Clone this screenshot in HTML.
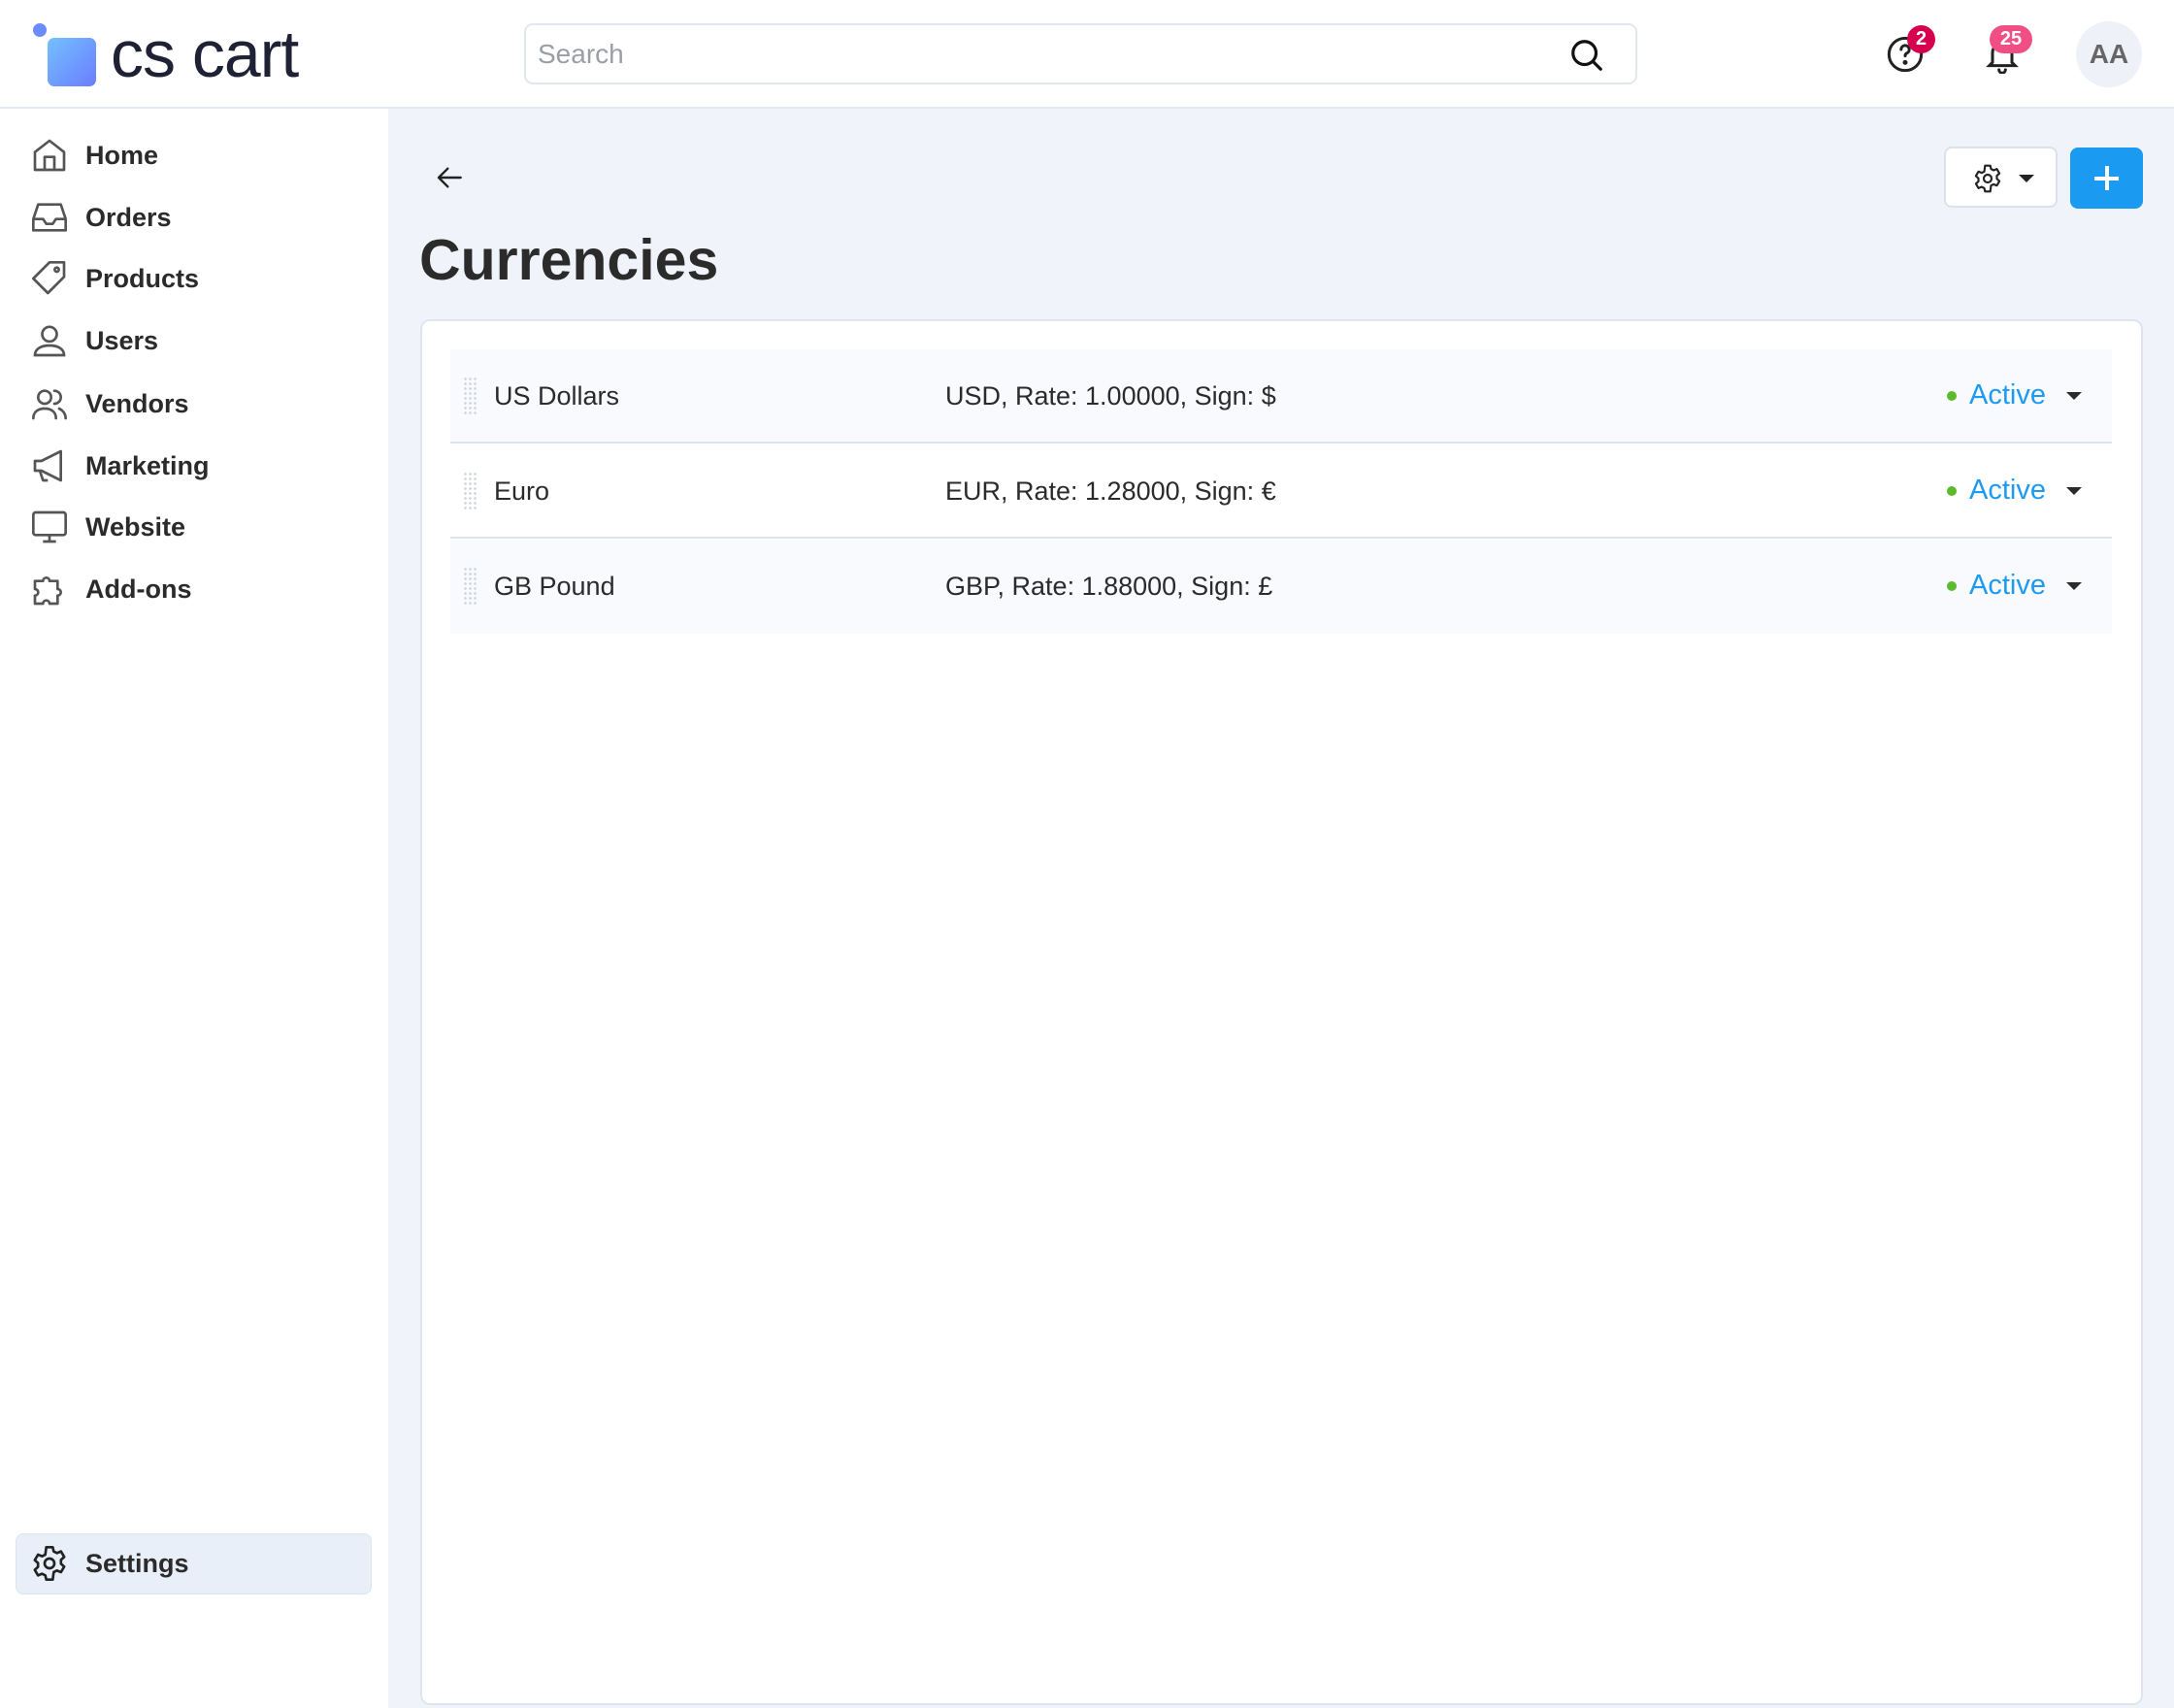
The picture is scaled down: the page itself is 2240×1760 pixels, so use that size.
<!DOCTYPE html>
<html><head><meta charset="utf-8"><style>
*{box-sizing:border-box;margin:0;padding:0}
body{width:2240px;height:1760px;overflow:hidden;background:#f0f4fa;font-family:"Liberation Sans",sans-serif;color:#2b2b2b;position:relative}
.hdr{position:absolute;left:0;top:0;width:2240px;height:112px;background:#fff;border-bottom:2px solid #e4e9f0}
.side{position:absolute;left:0;top:112px;width:400px;height:1648px;background:#fff}
.nav{position:absolute;left:88px;font-weight:bold;font-size:27px;color:#2b2b2b;line-height:40px}
.ic{position:absolute;left:31px;width:40px;height:40px}
.abs{position:absolute}
.row{position:absolute;left:464px;width:1712px;height:97px}
.row .nm{position:absolute;left:45px;top:30px;font-size:27px;line-height:36px}
.row .inf{position:absolute;left:510px;top:30px;font-size:27px;line-height:36px}
.row .dot{position:absolute;left:1542px;top:43px;width:10px;height:10px;border-radius:50%;background:#5bba2d}
.row .act{position:absolute;left:1565px;top:29px;font-size:29px;color:#1d9bf0;line-height:36px}
.row .car{position:absolute;left:1665px;top:44px;width:0;height:0;border-left:8px solid transparent;border-right:8px solid transparent;border-top:8px solid #2b2b2b}
.row .hd{position:absolute;left:13px;top:28px;width:16px;height:40px;background-image:radial-gradient(circle,#d4d9e0 1.3px,transparent 1.5px);background-size:5px 5px}
</style></head><body>
<div class="hdr">
  <div class="abs" style="left:34px;top:24px;width:14px;height:14px;border-radius:50%;background:#6b8cff"></div>
  <div class="abs" style="left:49px;top:39px;width:50px;height:50px;border-radius:7px;background:linear-gradient(135deg,#74c0ff,#6a7dff)"></div>
  <div class="abs" style="left:114px;top:16px;font-size:68px;letter-spacing:-1px;color:#1f2235;line-height:80px">cs cart</div>
  <div class="abs" style="left:540px;top:24px;width:1147px;height:63px;border:2px solid #e1e7ef;border-radius:9px;background:#fff">
    <div class="abs" style="left:12px;top:14px;font-size:28px;color:#9a9ea6;line-height:32px">Search</div>
    <svg class="abs" style="left:1074px;top:12px" width="38" height="38" viewBox="0 0 24 24" fill="none" stroke="#111" stroke-width="2" stroke-linecap="round"><circle cx="10.5" cy="10.5" r="7.5"/><path d="M16 16l5 5"/></svg>
  </div>
  <svg class="abs" style="left:1943px;top:36px" width="40" height="40" viewBox="0 0 24 24" fill="none" stroke="#222" stroke-width="1.8" stroke-linecap="round"><circle cx="12" cy="12" r="10"/><path d="M9.5 9a2.5 2.5 0 1 1 3.5 2.3c-.7.3-1 .9-1 1.7"/><circle cx="12" cy="17" r=".6" fill="#222"/></svg>
  <div class="abs" style="left:1965px;top:26px;width:29px;height:29px;border-radius:50%;background:#d6004f;color:#fff;font-weight:bold;font-size:20px;text-align:center;line-height:29px">2</div>
  <svg class="abs" style="left:2043px;top:36px" width="40" height="40" viewBox="0 0 24 24" fill="none" stroke="#222" stroke-width="1.8" stroke-linecap="round"><path d="M6 17V11a6 6 0 0 1 12 0v6l2 2H4z"/><path d="M10 21.5a2 2 0 0 0 4 0"/></svg>
  <div class="abs" style="left:2050px;top:26px;width:44px;height:29px;border-radius:15px;background:#f04f86;color:#fff;font-weight:bold;font-size:20px;text-align:center;line-height:29px">25</div>
  <div class="abs" style="left:2139px;top:22px;width:68px;height:68px;border-radius:50%;background:#eef2f8;color:#666;font-weight:bold;font-size:28px;text-align:center;line-height:68px">AA</div>
</div>
<div class="side">
  <svg class="ic" style="top:28px" viewBox="0 0 24 24" fill="none" stroke="#555" stroke-width="1.6" stroke-linejoin="round"><path d="M3 21V10l9-7 9 7v11z"/><path d="M9 21v-8h6v8"/></svg>
  <div class="nav" style="top:28px">Home</div>
  <svg class="ic" style="top:92px" viewBox="0 0 24 24" fill="none" stroke="#555" stroke-width="1.6" stroke-linejoin="round"><path d="M2 13l3-9h14l3 9v7H2z"/><path d="M2 13h6l2 3h4l2-3h6"/></svg>
  <div class="nav" style="top:92px">Orders</div>
  <svg class="ic" style="top:155px" viewBox="0 0 24 24" fill="none" stroke="#555" stroke-width="1.6" stroke-linejoin="round"><path d="M12 2h9v9L11 21l-9-9z"/><circle cx="16.5" cy="6.5" r="1.3"/></svg>
  <div class="nav" style="top:155px">Products</div>
  <svg class="ic" style="top:219px" viewBox="0 0 24 24" fill="none" stroke="#555" stroke-width="1.6"><circle cx="12" cy="8" r="4.5"/><path d="M3 21c0-4 4-6 9-6s9 2 9 6z"/></svg>
  <div class="nav" style="top:219px">Users</div>
  <svg class="ic" style="top:284px" viewBox="0 0 24 24" fill="none" stroke="#555" stroke-width="1.6" stroke-linecap="round"><circle cx="9" cy="8" r="4"/><path d="M2 21c0-4 3-6 7-6s7 2 7 6"/><path d="M15 4a4 4 0 0 1 0 8M18 15c2 1 4 3 4 6"/></svg>
  <div class="nav" style="top:284px">Vendors</div>
  <svg class="ic" style="top:348px" viewBox="0 0 24 24" fill="none" stroke="#555" stroke-width="1.6" stroke-linejoin="round"><path d="M3 9h4l12-6v18L7 15H3z"/><path d="M6 15l2 6h3"/></svg>
  <div class="nav" style="top:348px">Marketing</div>
  <svg class="ic" style="top:411px" viewBox="0 0 24 24" fill="none" stroke="#555" stroke-width="1.6"><rect x="2" y="3" width="20" height="14" rx="1.5"/><path d="M12 17v4M8 21h8"/></svg>
  <div class="nav" style="top:411px">Website</div>
  <svg class="ic" style="top:475px" viewBox="0 0 24 24" fill="none" stroke="#555" stroke-width="1.6" stroke-linejoin="round"><path d="M3 7h5a2 2 0 1 1 4 0h5v5a2 2 0 1 1 0 4v5h-5a2 2 0 1 0-4 0H3v-5a2 2 0 1 0 0-4z"/></svg>
  <div class="nav" style="top:475px">Add-ons</div>
  <div class="abs" style="left:16px;top:1468px;width:367px;height:63px;border-radius:8px;background:#e9eff8;border:1px solid #dde4ee"></div>
  <svg class="ic" style="top:1479px" viewBox="0 0 24 24" fill="none" stroke="#222" stroke-width="1.6" stroke-linejoin="round"><path d="M10 2h4l.6 2.6 2 1 2.5-1 2 3.4-2 1.8v2.4l2 1.8-2 3.4-2.5-1-2 1L14 22h-4l-.6-2.6-2-1-2.5 1-2-3.4 2-1.8v-2.4l-2-1.8 2-3.4 2.5 1 2-1z"/><circle cx="12" cy="12" r="3"/></svg>
  <div class="nav" style="top:1479px">Settings</div>
</div>
<svg class="abs" style="left:448px;top:167px" width="32" height="32" viewBox="0 0 24 24" fill="none" stroke="#222" stroke-width="1.8" stroke-linecap="round" stroke-linejoin="round"><path d="M20 12H4M10 5l-7 7 7 7"/></svg>
<div class="abs" style="left:432px;top:230px;font-size:59px;font-weight:bold;color:#2b2b2b;line-height:76px">Currencies</div>
<div class="abs" style="left:2003px;top:151px;width:117px;height:63px;border-radius:8px;background:#fff;border:2px solid #dbe2ec">
  <svg class="abs" style="left:27px;top:15px" width="32" height="32" viewBox="0 0 24 24" fill="none" stroke="#222" stroke-width="1.6" stroke-linejoin="round"><path d="M10 2h4l.6 2.6 2 1 2.5-1 2 3.4-2 1.8v2.4l2 1.8-2 3.4-2.5-1-2 1L14 22h-4l-.6-2.6-2-1-2.5 1-2-3.4 2-1.8v-2.4l-2-1.8 2-3.4 2.5 1 2-1z"/><circle cx="12" cy="12" r="3"/></svg>
  <div class="abs" style="left:75px;top:27px;border-left:8px solid transparent;border-right:8px solid transparent;border-top:8px solid #222"></div>
</div>
<div class="abs" style="left:2133px;top:152px;width:75px;height:63px;border-radius:8px;background:#1a9af0">
  <div class="abs" style="left:25px;top:30px;width:25px;height:4px;background:#fff"></div>
  <div class="abs" style="left:35.5px;top:19px;width:4px;height:25px;background:#fff"></div>
</div>
<div class="abs" style="left:433px;top:329px;width:1775px;height:1428px;background:#fff;border:2px solid #dfe5ee;border-radius:10px"></div>
<div class="row" style="top:360px;background:#f8fafd;border-bottom:2px solid #dde4ee"><div class="hd"></div><div class="nm">US Dollars</div><div class="inf">USD, Rate: 1.00000, Sign: $</div><div class="dot"></div><div class="act">Active</div><div class="car"></div></div>
<div class="row" style="top:458px;background:#fff;border-bottom:2px solid #dde4ee"><div class="hd"></div><div class="nm">Euro</div><div class="inf">EUR, Rate: 1.28000, Sign: €</div><div class="dot"></div><div class="act">Active</div><div class="car"></div></div>
<div class="row" style="top:556px;background:#f8fafd"><div class="hd"></div><div class="nm">GB Pound</div><div class="inf">GBP, Rate: 1.88000, Sign: £</div><div class="dot"></div><div class="act">Active</div><div class="car"></div></div>
</body></html>
